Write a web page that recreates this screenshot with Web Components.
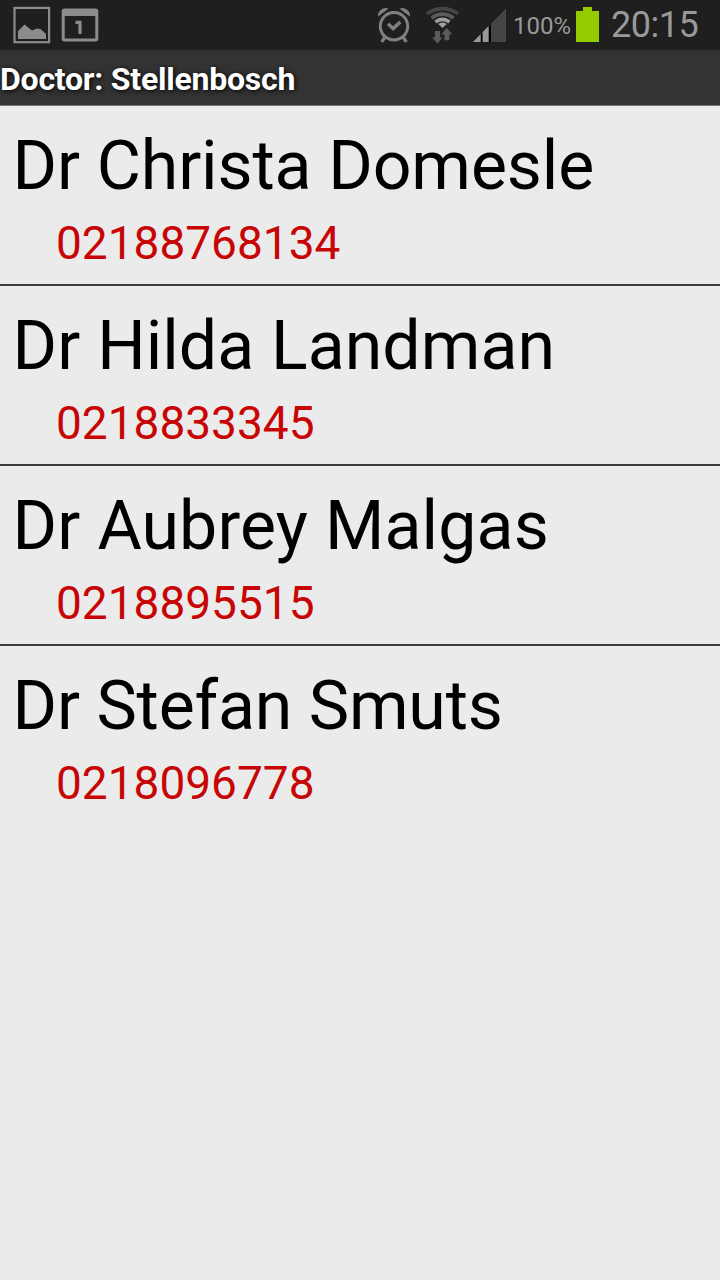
<!DOCTYPE html>
<html lang="en">
<head>
<meta charset="utf-8">
<title>Doctor: Stellenbosch</title>
<style>
	body {
		margin: 0;
		min-height: 1280px;
		background: #ebebeb;
		font-family: Roboto, 'Liberation Sans', sans-serif;
	}
</style>
</head>
<body>
<status-bar battery="100%" time="20:15"></status-bar>
<title-bar>Doctor: Stellenbosch</title-bar>
<contact-list>
	<contact-row phone="02188768134" style="--tracking: -0.12px">Dr Christa Domesle</contact-row>
	<contact-row phone="0218833345" style="--tracking: 0.03px">Dr Hilda Landman</contact-row>
	<contact-row phone="0218895515" style="--tracking: 0.12px">Dr Aubrey Malgas</contact-row>
	<contact-row phone="0218096778" style="--tracking: -0.2px">Dr Stefan Smuts</contact-row>
</contact-list>

<script>
class StatusBar extends HTMLElement {
	constructor() {
		super();
		this.attachShadow({ mode: 'open' });
		this.shadowRoot.innerHTML = `
      <style>
        :host {
          display: flex;
          box-sizing: border-box;
          height: 50px;
          padding: 0 21px 0 13px;
          background: #1f1f1f;
          color: #999;
        }
        svg {
          display: block;
          flex: none;
        }
        .group {
          display: flex;
        }
        .right {
          margin-left: auto;
        }
        .battery {
          width: 62px;
          font-size: 24px;
          line-height: 52px;
          margin-left: 6px;
        }
        .time {
          width: 88px;
          margin-left: 11px;
          font-size: 36px;
          line-height: 51px;
          letter-spacing: -0.5px;
        }
      </style>
      <div class="group">
        <svg width="38" height="50" viewBox="13 0 38 50">
          <rect x="14.5" y="7.9" width="34.6" height="34.3" fill="none" stroke="#8c8c8c" stroke-width="2.2"/>
          <path d="M18 39V31L24.500 24.500 32 30.500 37 28.500 40.500 29 46 34V39Z" fill="#8c8c8c"/>
        </svg>
        <svg width="50" height="50" viewBox="51 0 50 50">
          <path fill-rule="evenodd" d="M64.500 8.500H95.500Q98.300 8.500 98.300 11.500V38.500Q98.300 41.400 95.500 41.400H64.500Q61.700 41.400 61.700 38.500V11.500Q61.700 8.500 64.500 8.500ZM64.700 16V38.500H95.300V16Z" fill="#8c8c8c"/>
          <path d="M75.500 22.300H80V34" fill="none" stroke="#8c8c8c" stroke-width="3.200"/>
        </svg>
      </div>
      <div class="group right">
        <svg width="136" height="50" viewBox="371 0 136 50">
          <g fill="none" stroke="#808080">
            <circle cx="394" cy="26.200" r="13.700" stroke-width="3"/>
            <path d="M388 23.800 393.200 28.600 400.300 22" stroke-width="3.400"/>
            <path d="M384.500 37.500 381.800 42M403.500 37.500 406.200 42" stroke-width="3.400"/>
          </g>
          <path d="M378 16.500Q377.500 12.500 381 9.800 384.500 7 388.500 8.800ZM410 16.500Q410.500 12.500 407 9.800 403.500 7 399.500 8.800Z" fill="#808080"/>
          <g fill="none" stroke-width="3.600">
            <path d="M427 13.800Q442.500 3.500 458 13.800" stroke="#454545"/>
            <path d="M431.500 18Q442.500 10.300 453.500 18" stroke="#5b5b5b"/>
            <path d="M435.500 22Q442.500 16.800 449.500 22" stroke="#a0a0a0"/>
          </g>
          <path d="M438.200 23.900Q442.500 21 446.800 23.900L442.500 28Z" fill="#a0a0a0"/>
          <path d="M435 31H440V37.500H442.500L437.500 43.500 432 37.500H435ZM444.500 40.200V34.500H441.300L446.700 27.700 452.300 34.500H449.300V40.200Z" fill="#5b5b5b"/>
          <path d="M473 42 506 8.500V42Z" fill="#454545"/>
          <path d="M473 42 491 23.700V42Z" fill="#999"/>
          <path d="M480.700 34.200 482.600 32.300V42H480.700ZM488.700 26 491 23.700V42H488.700Z" fill="#000"/>
        </svg>
        <div class="battery"></div>
        <svg width="25" height="50" viewBox="575 0 25 50">
          <path d="M583 7H592V11H599V42H576V11H583Z" fill="#93cd00"/>
        </svg>
        <div class="time"></div>
      </div>
    `;
		this.shadowRoot.querySelector('.battery').textContent = this.getAttribute('battery');
		this.shadowRoot.querySelector('.time').textContent = this.getAttribute('time');
	}
}

class TitleBar extends HTMLElement {
	constructor() {
		super();
		this.attachShadow({ mode: 'open' });
		this.shadowRoot.innerHTML = `
      <style>
        :host {
          display: block;
          box-sizing: border-box;
          height: 56px;
          border-bottom: 1px solid #777;
          background: #333;
          color: #fff;
          font-size: 32px;
          font-weight: bold;
          line-height: 59px;
          letter-spacing: -0.23px;
          white-space: nowrap;
          text-shadow: 1px 1px 5px #000;
        }
      </style>
      <slot></slot>
    `;
	}
}

class ContactList extends HTMLElement {
	constructor() {
		super();
		this.attachShadow({ mode: 'open' });
		this.shadowRoot.innerHTML = `
      <style>
        :host {
          display: flex;
          flex-direction: column;
        }
        ::slotted(:not(:last-child)) {
          border-bottom: 2px solid #3c3c3c;
        }
      </style>
      <slot></slot>
    `;
	}
}

class ContactRow extends HTMLElement {
	constructor() {
		super();
		this.attachShadow({ mode: 'open' });
		this.shadowRoot.innerHTML = `
      <style>
        :host {
          display: block;
          height: 178px;
          white-space: nowrap;
        }
        .name {
          padding: 20px 0 0 12.500px;
          color: #000;
          font-size: 68px;
          line-height: 80px;
          letter-spacing: var(--tracking, 0);
        }
        .phone {
          padding: 10px 0 0 56px;
          color: #c80505;
          font-size: 46px;
          line-height: 54px;
        }
      </style>
      <div class="name"><slot></slot></div>
      <div class="phone"></div>
    `;
		this.shadowRoot.querySelector('.phone').textContent = this.getAttribute('phone');
	}
}

customElements.define('status-bar', StatusBar);
customElements.define('title-bar', TitleBar);
customElements.define('contact-list', ContactList);
customElements.define('contact-row', ContactRow);
</script>
</body>
</html>
